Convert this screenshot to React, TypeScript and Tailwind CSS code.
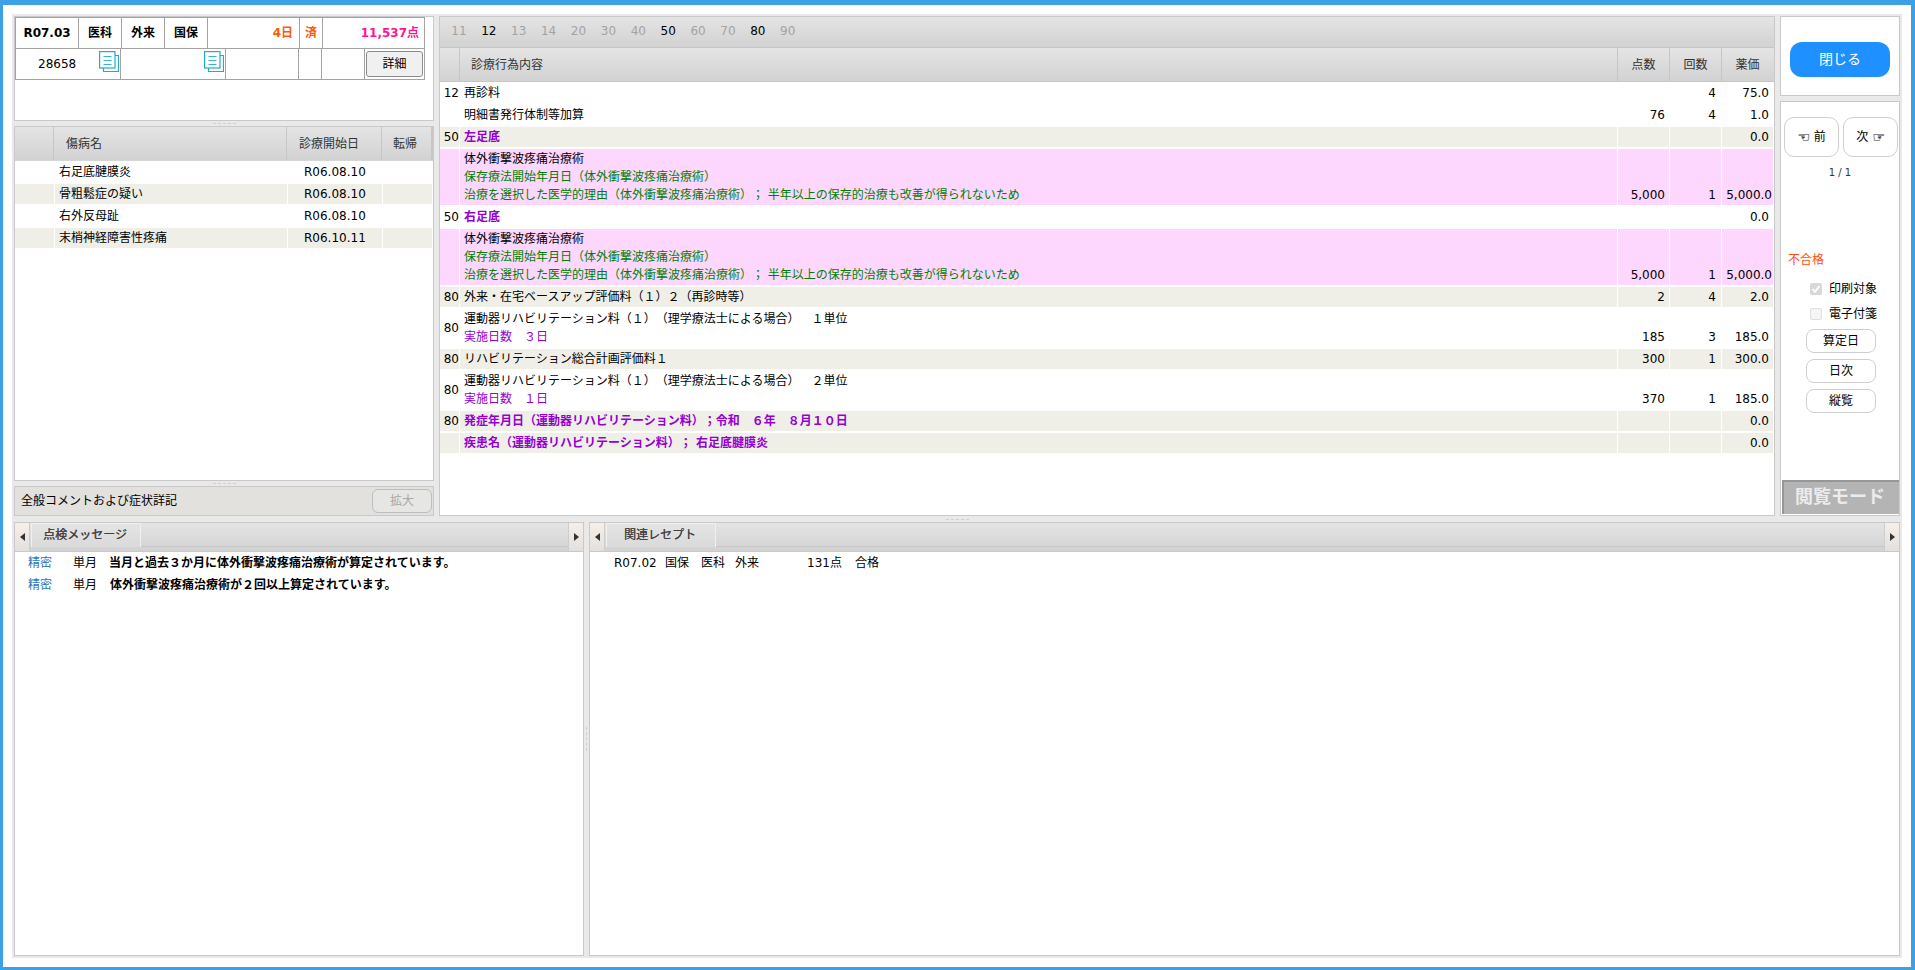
import React from "react";

const PANEL = "bg-white border border-[#c9c9c9]";
const HEAD = "bg-gradient-to-b from-[#e4e4e4] to-[#d2d2d2]";

function DocIcon() {
  return (
    <svg width="20" height="21" viewBox="0 0 20 21" fill="none" stroke="#1fadc6" strokeWidth="1.2" className="shrink-0">
      <path d="M16 4.5h3.5v16H4.5V17" />
      <rect x="0.6" y="0.6" width="15.4" height="16.4" fill="#fff" />
      <path d="M4.5 5.5h8M4.5 9.5h8M4.5 13.5h8" strokeWidth="0.9" />
    </svg>
  );
}

function Grip({ w = "w-[23px]" }: { w?: string }) {
  return <div className={`${w} border-t border-dashed border-[#cfcfcf]`} />;
}

function DiseaseRow({ name, date, band }: { name: string; date: string; band?: boolean }) {
  const bg = band ? "bg-[#efefe7]" : "bg-white";
  return (
    <div className="flex h-[20px] mb-[2px] leading-[20px] pr-px">
      <div className={`w-[39px] mr-px ${bg}`} />
      <div className={`w-[232px] mr-px pl-[4px] ${bg}`}>{name}</div>
      <div className={`w-[94px] mr-px pl-[16px] ${bg}`}>{date}</div>
      <div className={`flex-1 ${bg}`} />
    </div>
  );
}

type Line = { t: string; c?: string };
type RowData = {
  code?: string;
  lines: Line[];
  h: string;
  bg: string;
  p?: string;
  n?: string;
  v?: string;
  wide?: boolean;
};

const PURPLE = "text-[#9400d3]";
const PURPLEB = "text-[#9400d3] font-bold";
const GREEN = "text-[#008000]";
const BAND = "bg-[#efefe7]";
const PINK = "bg-[#fdd7fd]";
const WHITE = "bg-white";

const pinkLines: Line[] = [
  { t: "体外衝撃波疼痛治療術" },
  { t: "保存療法開始年月日（体外衝撃波疼痛治療術）", c: GREEN },
  { t: "治療を選択した医学的理由（体外衝撃波疼痛治療術）； 半年以上の保存的治療も改善が得られないため", c: GREEN },
];

const rows: RowData[] = [
  { code: "12", lines: [{ t: "再診料" }], h: "h-[20px]", bg: WHITE, n: "4", v: "75.0" },
  { lines: [{ t: "明細書発行体制等加算" }], h: "h-[20px]", bg: WHITE, p: "76", n: "4", v: "1.0" },
  { code: "50", lines: [{ t: "左足底", c: PURPLEB }], h: "h-[20px]", bg: BAND, v: "0.0" },
  { lines: pinkLines, h: "h-[56px]", bg: PINK, p: "5,000", n: "1", v: "5,000.0", wide: true },
  { code: "50", lines: [{ t: "右足底", c: PURPLEB }], h: "h-[20px]", bg: WHITE, v: "0.0" },
  { lines: pinkLines, h: "h-[56px]", bg: PINK, p: "5,000", n: "1", v: "5,000.0", wide: true },
  { code: "80", lines: [{ t: "外来・在宅ベースアップ評価料（１）２（再診時等）" }], h: "h-[20px]", bg: BAND, p: "2", n: "4", v: "2.0" },
  {
    code: "80",
    lines: [{ t: "運動器リハビリテーション料（１）（理学療法士による場合）　１単位" }, { t: "実施日数　３日", c: PURPLE }],
    h: "h-[38px]",
    bg: WHITE,
    p: "185",
    n: "3",
    v: "185.0",
  },
  { code: "80", lines: [{ t: "リハビリテーション総合計画評価料１" }], h: "h-[20px]", bg: BAND, p: "300", n: "1", v: "300.0" },
  {
    code: "80",
    lines: [{ t: "運動器リハビリテーション料（１）（理学療法士による場合）　２単位" }, { t: "実施日数　１日", c: PURPLE }],
    h: "h-[38px]",
    bg: WHITE,
    p: "370",
    n: "1",
    v: "185.0",
  },
  { code: "80", lines: [{ t: "発症年月日（運動器リハビリテーション料）；令和　６年　８月１０日", c: PURPLEB }], h: "h-[20px]", bg: BAND, v: "0.0" },
  { lines: [{ t: "疾患名（運動器リハビリテーション料）； 右足底腱膜炎", c: PURPLEB }], h: "h-[20px]", bg: BAND, v: "0.0" },
];

function MainRow({ r }: { r: RowData }) {
  return (
    <div className={`flex ${r.h} mb-[2px] pr-px`}>
      <div className={`w-[19px] mr-px flex items-center justify-end leading-[18px] ${r.bg}`}>{r.code}</div>
      <div className={`w-[1157px] mr-px pl-[4px] flex flex-col justify-center ${r.bg}`}>
        {r.lines.map((l, i) => (
          <div key={i} className={`leading-[18px] whitespace-pre ${l.c ?? ""}`}>
            {l.t}
          </div>
        ))}
      </div>
      <div className={`w-[51px] mr-px flex items-end justify-end pr-[4px] pb-px leading-[18px] ${r.bg}`}>{r.p}</div>
      <div className={`w-[51px] mr-px flex items-end justify-end pr-[5px] pb-px leading-[18px] ${r.bg}`}>{r.n}</div>
      <div className={`w-[51px] flex items-end justify-end pb-px leading-[18px] ${r.wide ? "pr-px" : "pr-[4px]"} ${r.bg}`}>{r.v}</div>
    </div>
  );
}

function Arrow({ dir }: { dir: "l" | "r" }) {
  return (
    <div className={`w-[15px] h-full flex items-center justify-center bg-gradient-to-b from-[#f7eee8] to-[#e2e0de] border-[#cdcdcd] ${dir === "l" ? "border-r" : "border-l"}`}>
      <svg width="5" height="8" viewBox="0 0 5 8" fill="#333">
        {dir === "l" ? <path d="M5 0v8L0 4z" /> : <path d="M0 0v8l5-4z" />}
      </svg>
    </div>
  );
}

function TabStrip({ label, tabW }: { label: string; tabW: string }) {
  return (
    <div className={`flex h-[29px] shrink-0 items-start border-b border-[#c9c9c9] ${HEAD}`}>
      <Arrow dir="l" />
      <div className={`${tabW} h-[24px] ml-px pr-[2px] pb-[2px] flex items-center justify-center border-l border-r border-t border-[#f0f0f0] text-[#444] [text-shadow:0.3px_0_0_#444] bg-gradient-to-b from-[#e4e4e4] to-[#dadada]`}>
        {label}
      </div>
      <div className="flex-1 h-[24px] border-b border-[#c6c6c6]" />
      <Arrow dir="r" />
    </div>
  );
}

function PillButton({ label }: { label: string }) {
  return (
    <div className="ml-[25px] w-[70px] h-[24px] flex items-center justify-center rounded-[8px] border border-[#cfcfcf] bg-white">
      {label}
    </div>
  );
}

function Toolbar() {
  const nums: [string, boolean][] = [
    ["11", false],
    ["12", true],
    ["13", false],
    ["14", false],
    ["20", false],
    ["30", false],
    ["40", false],
    ["50", true],
    ["60", false],
    ["70", false],
    ["80", true],
    ["90", false],
  ];
  return (
    <div className={`flex h-[31px] shrink-0 items-center pl-[4px] pb-[2px] border-b border-[#c6c6c6] ${HEAD}`}>
      {nums.map(([n, on]) => (
        <div key={n} className={`w-[29.9px] text-center ${on ? "text-black" : "text-[#a3a3a3]"}`}>
          {n}
        </div>
      ))}
    </div>
  );
}

export default function App() {
  return (
    <div className="w-[1915px] h-[970px] bg-white border-t-[5px] border-l-[3px] border-r-[4px] border-b-[3px] border-[#3ea0e4] p-[9px] text-[12px] text-black [text-spacing-trim:space-all] font-['DejaVu_Sans','Noto_Sans_CJK_JP',sans-serif]">
      <div className="w-[1890px] h-[944px] bg-[#e9e9e9] p-[2px] flex flex-col">
        {/* top row */}
        <div className="flex h-[500px] shrink-0">
          {/* left column */}
          <div className="w-[420px] flex flex-col shrink-0">
            <div className={`h-[105px] shrink-0 ${PANEL}`}>
              <div className="w-[410px] border-l border-t border-[#a3a3a3]">
                <div className="flex h-[31px] border-b border-[#a3a3a3] font-bold">
                  <div className="w-[63px] border-r border-[#a3a3a3] flex items-center justify-center">R07.03</div>
                  <div className="w-[43px] border-r border-[#a3a3a3] flex items-center justify-center">医科</div>
                  <div className="w-[43px] border-r border-[#a3a3a3] flex items-center justify-center">外来</div>
                  <div className="w-[43px] border-r border-[#a3a3a3] flex items-center justify-center">国保</div>
                  <div className="w-[92px] border-r border-[#a3a3a3] flex items-center justify-end pr-[6px] text-[#ff5a0a]">4日</div>
                  <div className="w-[23px] border-r border-[#a3a3a3] flex items-center justify-center text-[#ff5a0a]">済</div>
                  <div className="w-[102px] border-r border-[#a3a3a3] flex items-center justify-end pr-[5px] text-[#ff1493]">11,537点</div>
                </div>
                <div className="flex h-[31px] border-b border-[#a3a3a3]">
                  <div className="w-[105px] border-r border-[#a3a3a3] flex items-center pl-[22px] pr-px justify-between relative">
                    <span>28658</span>
                    <span className="flex self-start mt-[2px]"><DocIcon /></span>
                  </div>
                  <div className="w-[105px] border-r border-[#a3a3a3] flex justify-end pr-px">
                    <span className="flex self-start mt-[2px]"><DocIcon /></span>
                  </div>
                  <div className="w-[73px] border-r border-[#a3a3a3]" />
                  <div className="w-[23px] border-r border-[#a3a3a3]" />
                  <div className="w-[43px] border-r border-[#a3a3a3]" />
                  <div className="w-[60px] border-r border-[#a3a3a3] flex items-center justify-center">
                    <div className="w-[57px] h-[26px] flex items-center justify-center rounded-[3px] border border-[#8c8c8c] bg-[#f0f0f0]">詳細</div>
                  </div>
                </div>
              </div>
            </div>
            <div className="h-[5px] shrink-0 flex items-center justify-center"><Grip /></div>
            <div className={`h-[355px] shrink-0 ${PANEL}`}>
              <div className={`flex h-[34px] leading-[34px] text-[#333] border-b border-[#d6d6d6] ${HEAD}`}>
                <div className="w-[39px] border-r border-[#c6c6c6]" />
                <div className="w-[233px] border-r border-[#c6c6c6] pl-[12px]">傷病名</div>
                <div className="w-[95px] border-r border-[#c6c6c6] pl-[12px]">診療開始日</div>
                <div className="flex-1 pl-[11px] border-r-2 border-[#c6c6c6]">転帰</div>
              </div>
              <div className="pt-px">
                <DiseaseRow name="右足底腱膜炎" date="R06.08.10" />
                <DiseaseRow name="骨粗鬆症の疑い" date="R06.08.10" band />
                <DiseaseRow name="右外反母趾" date="R06.08.10" />
                <DiseaseRow name="末梢神経障害性疼痛" date="R06.10.11" band />
              </div>
            </div>
            <div className="h-[5px] shrink-0 flex items-center justify-center"><Grip /></div>
            <div className="h-[30px] shrink-0 flex items-center justify-between pl-[6px] pr-px border border-[#c9c9c9] bg-[#e2e1de]">
              <span>全般コメントおよび症状詳記</span>
              <div className="w-[60px] h-[24px] flex items-center justify-center rounded-[6px] border border-[#bdbdbd] bg-[#e6e6e4] text-[#a8a8a8]">拡大</div>
            </div>
          </div>

          {/* center */}
          <div className={`w-[1336px] ml-[5px] shrink-0 flex flex-col ${PANEL}`}>
            <Toolbar />
            <div className={`flex h-[34px] shrink-0 leading-[35px] text-[#333] border-b border-[#c6c6c6] ${HEAD}`}>
              <div className="w-[20px] border-r border-[#c6c6c6]" />
              <div className="w-[1158px] border-r border-[#c6c6c6] pl-[11px]">診療行為内容</div>
              <div className="w-[52px] border-r border-[#c6c6c6] text-center">点数</div>
              <div className="w-[52px] border-r border-[#c6c6c6] text-center">回数</div>
              <div className="w-[51px] text-center">薬価</div>
            </div>
            <div className="pt-px">
              {rows.map((r, i) => (
                <MainRow key={i} r={r} />
              ))}
            </div>
          </div>

          {/* right */}
          <div className="w-[120px] ml-[5px] shrink-0 flex flex-col">
            <div className={`h-[80px] shrink-0 flex items-center justify-center pt-[7px] ${PANEL}`}>
              <div className="w-[100px] h-[35px] flex items-center justify-center rounded-[12px] bg-[#1e90ff] text-white text-[14px]">閉じる</div>
            </div>
            <div className={`h-[415px] mt-[5px] shrink-0 flex flex-col ${PANEL}`}>
              <div className="flex gap-[4px] pl-[3px] pt-[15px]">
                <div className="w-[55px] h-[40px] flex items-center justify-center gap-[4px] rounded-[10px] border border-[#cfcfcf] bg-white">
                  <span className="text-[14px] [text-shadow:0.5px_0_0_#000]">☜</span>
                  <span>前</span>
                </div>
                <div className="w-[55px] h-[40px] flex items-center justify-center gap-[4px] rounded-[10px] border border-[#cfcfcf] bg-white">
                  <span>次</span>
                  <span className="text-[14px] [text-shadow:0.5px_0_0_#000]">☞</span>
                </div>
              </div>
              <div className="mt-[8px] h-[16px] leading-[16px] text-center text-[10px] text-[#333]">1 / 1</div>
              <div className="mt-[70px] h-[18px] leading-[18px] pl-[7px] text-[#ff4c14]">不合格</div>
              <div className="mt-[7px] h-[25px] flex items-center pl-[29px]">
                <span className="w-[12px] h-[12px] mr-[7px] rounded-[2px] bg-[#d8d8d8] flex items-center justify-center">
                  <svg width="10" height="10" viewBox="0 0 10 10" fill="none" stroke="#fff" strokeWidth="1.8">
                    <path d="M1.5 5.2 4 7.8 8.5 2" />
                  </svg>
                </span>
                印刷対象
              </div>
              <div className="h-[25px] flex items-center pl-[29px]">
                <span className="w-[12px] h-[12px] mr-[7px] rounded-[2px] bg-[#f5f5f5] border border-[#dedede]" />
                電子付箋
              </div>
              <div className="mt-[3px] flex flex-col gap-[6px]">
                <PillButton label="算定日" />
                <PillButton label="日次" />
                <PillButton label="縦覧" />
              </div>
              <div className="mt-auto ml-px mb-px h-[34px] pb-[4px] pr-[3px] flex items-center justify-center bg-[#b4b4b4] border-t-2 border-l-2 border-[#969696] text-[18px] font-bold text-[#ececec]">
                閲覧モード
              </div>
            </div>
          </div>
        </div>

        {/* grip */}
        <div className="h-[6px] shrink-0 flex items-center pl-[932px]"><Grip /></div>

        {/* bottom row */}
        <div className="flex h-[434px] shrink-0">
          <div className={`w-[570px] shrink-0 flex flex-col ${PANEL}`}>
            <TabStrip label="点検メッセージ" tabW="w-[110px]" />
            <div className="flex h-[22px] leading-[22px]">
              <div className="w-[58px] pl-[13px] text-[#2b73b5]">精密</div>
              <div className="w-[36px]">単月</div>
              <div className="font-bold">当月と過去３か月に体外衝撃波疼痛治療術が算定されています。</div>
            </div>
            <div className="flex h-[22px] leading-[22px]">
              <div className="w-[58px] pl-[13px] text-[#2b73b5]">精密</div>
              <div className="w-[37px]">単月</div>
              <div className="font-bold">体外衝撃波疼痛治療術が２回以上算定されています。</div>
            </div>
          </div>
          <div className="w-[5px] shrink-0 flex items-center justify-center">
            <div className="h-[24px] border-l border-dashed border-[#cfcfcf]" />
          </div>
          <div className={`w-[1311px] shrink-0 flex flex-col ${PANEL}`}>
            <TabStrip label="関連レセプト" tabW="w-[110px]" />
            <div className="flex h-[22px] leading-[22px] pl-[24px]">
              <div className="w-[51px]">R07.02</div>
              <div className="w-[36px]">国保</div>
              <div className="w-[34px]">医科</div>
              <div className="w-[72px]">外来</div>
              <div className="w-[48px]">131点</div>
              <div>合格</div>
            </div>
          </div>
        </div>
      </div>
    </div>
  );
}
